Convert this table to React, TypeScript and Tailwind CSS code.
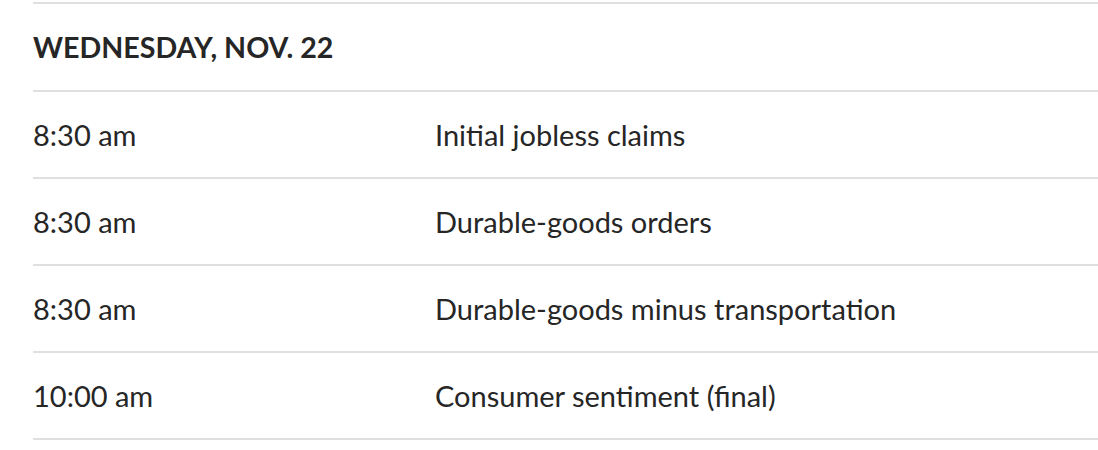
import React from "react";

const EVENTS = [
  { time: "8:30 am", name: "Initial jobless claims" },
  { time: "8:30 am", name: "Durable-goods orders" },
  { time: "8:30 am", name: "Durable-goods minus transportation" },
  { time: "10:00 am", name: "Consumer sentiment (final)" },
];

export default function App() {
  return (
    <div className="min-h-[450px] bg-white pt-[2px] pl-[33px] font-['Lato',sans-serif] text-[#262626]">
      <div className="border-t-2 border-[#e0e0e0]">
        <h2 className="flex h-[86px] items-center text-[28.6px] font-bold uppercase leading-none">
          Wednesday, Nov. 22
        </h2>
        {EVENTS.map((e, i) => (
          <div
            key={i}
            className="flex h-[87px] items-center border-t-2 border-[#e0e0e0] text-[29px] leading-none"
          >
            <span className="w-[402px] shrink-0">{e.time}</span>
            <span>{e.name}</span>
          </div>
        ))}
        <div className="border-t-2 border-[#e0e0e0]" />
      </div>
    </div>
  );
}
